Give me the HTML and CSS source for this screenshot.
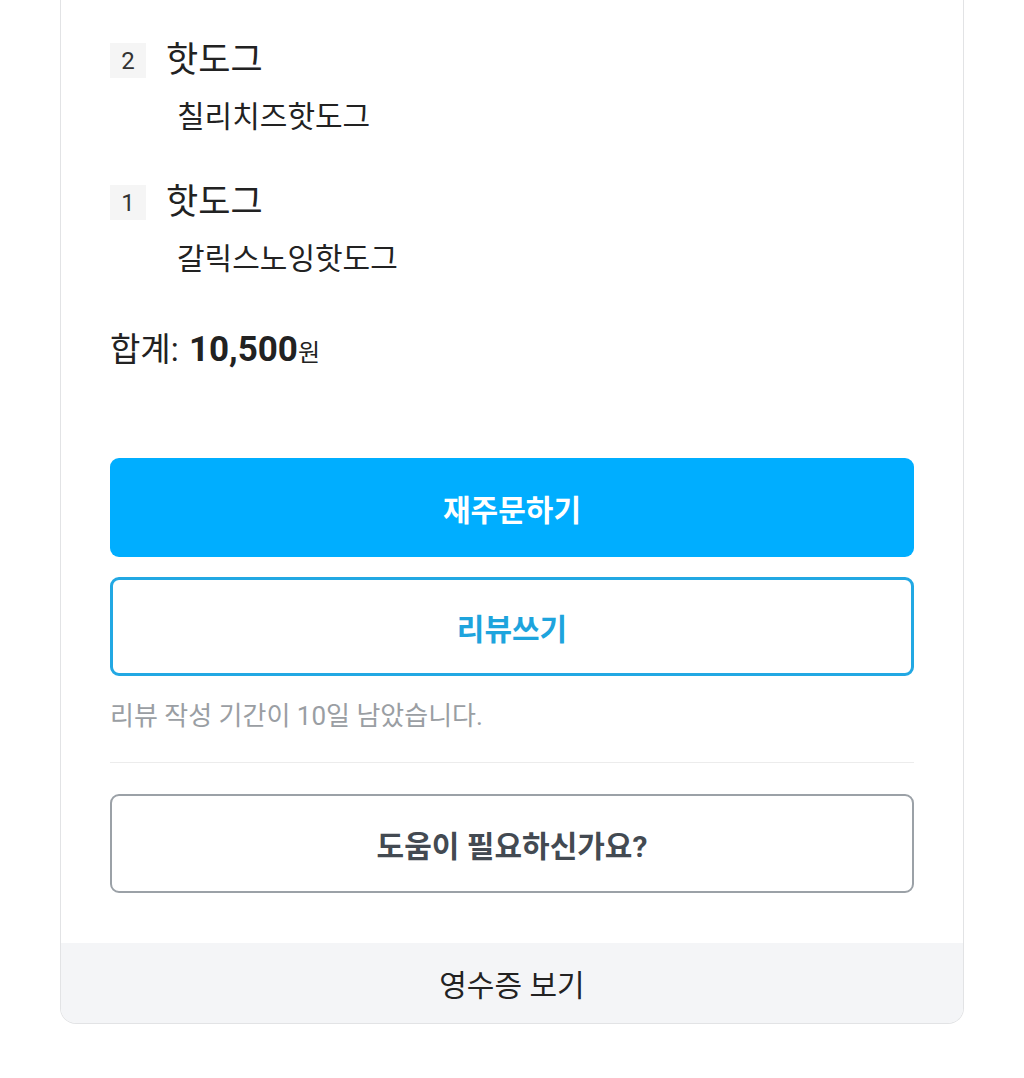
FILE: index.html
```html
<!DOCTYPE html>
<html lang="ko">
<head>
<meta charset="utf-8">
<title>주문 상세</title>
<link rel="stylesheet" href="styles.css">
</head>
<body>
<div class="card">
  <div class="card-body">
    <div class="item">
      <div class="item-head">
        <span class="qty">2</span>
        <span class="name">핫도그</span>
      </div>
      <div class="option">칠리치즈핫도그</div>
    </div>
    <div class="item">
      <div class="item-head">
        <span class="qty">1</span>
        <span class="name">핫도그</span>
      </div>
      <div class="option">갈릭스노잉핫도그</div>
    </div>
    <div class="total">합계: <strong class="amount">10,500</strong><span class="won">원</span></div>

    <button class="btn btn-primary">재주문하기</button>
    <button class="btn btn-outline">리뷰쓰기</button>
    <p class="note">리뷰 작성 기간이 10일 남았습니다.</p>
    <hr class="divider">
    <button class="btn btn-gray">도움이 필요하신가요?</button>
  </div>
  <div class="card-footer">영수증 보기</div>
</div>
</body>
</html>
```
FILE: styles.css
```css
* { box-sizing: border-box; }
html, body {
  margin: 0;
  padding: 0;
  background: #ffffff;
}
body {
  font-family: Roboto, "Noto Sans CJK KR", "Noto Sans", sans-serif;
  color: #222;
}
.card {
  width: 904px;
  margin-left: 60px;
  border: 1px solid #e2e3e5;
  border-top: none;
  border-radius: 0 0 16px 16px;
  overflow: hidden;
  background: #fff;
}
.card-body {
  padding: 43px 49px 50px;
  display: flex;
  flex-direction: column;
}
.item + .item { margin-top: 48px; }
.item-head {
  display: flex;
  align-items: center;
  height: 35px;
}
.qty {
  width: 36px;
  height: 35px;
  background: #f5f5f5;
  color: #333;
  font-size: 24px;
  display: flex;
  align-items: center;
  justify-content: center;
  margin-right: 20px;
}
.name {
  font-size: 35px;
  line-height: 35px;
  color: #222;
}
.option {
  margin-top: 19px;
  margin-left: 67px;
  font-size: 30px;
  line-height: 40px;
  color: #222;
}
.total {
  margin-top: 51px;
  font-size: 33px;
  line-height: 40px;
  color: #222;
}
.amount {
  font-size: 35px;
  font-weight: 700;
  margin-left: 2px;
}
.won {
  font-size: 24px;
}
.btn {
  display: block;
  width: 100%;
  height: 99px;
  border-radius: 9px;
  font-family: Roboto, "Noto Sans CJK KR", sans-serif;
  font-size: 30px;
  font-weight: 700;
  cursor: pointer;
}
.btn-primary {
  margin-top: 85px;
  background: #00aeff;
  border: none;
  color: #fff;
}
.btn-outline {
  margin-top: 20px;
  background: #fff;
  border: 3px solid #22a8e3;
  color: #1ea4dd;
}
.note {
  margin: 23px 0 0;
  font-size: 26px;
  line-height: 34px;
  color: #9a9ea3;
}
.divider {
  margin: 29px 0 0;
  border: none;
  border-top: 1px solid #ececec;
  height: 0;
}
.btn-gray {
  margin-top: 31px;
  background: #fff;
  border: 2.5px solid #9ba1a7;
  color: #434a52;
}
.card-footer {
  height: 80px;
  background: #f4f5f7;
  display: flex;
  align-items: center;
  justify-content: center;
  font-size: 30px;
  color: #222;
}
```
